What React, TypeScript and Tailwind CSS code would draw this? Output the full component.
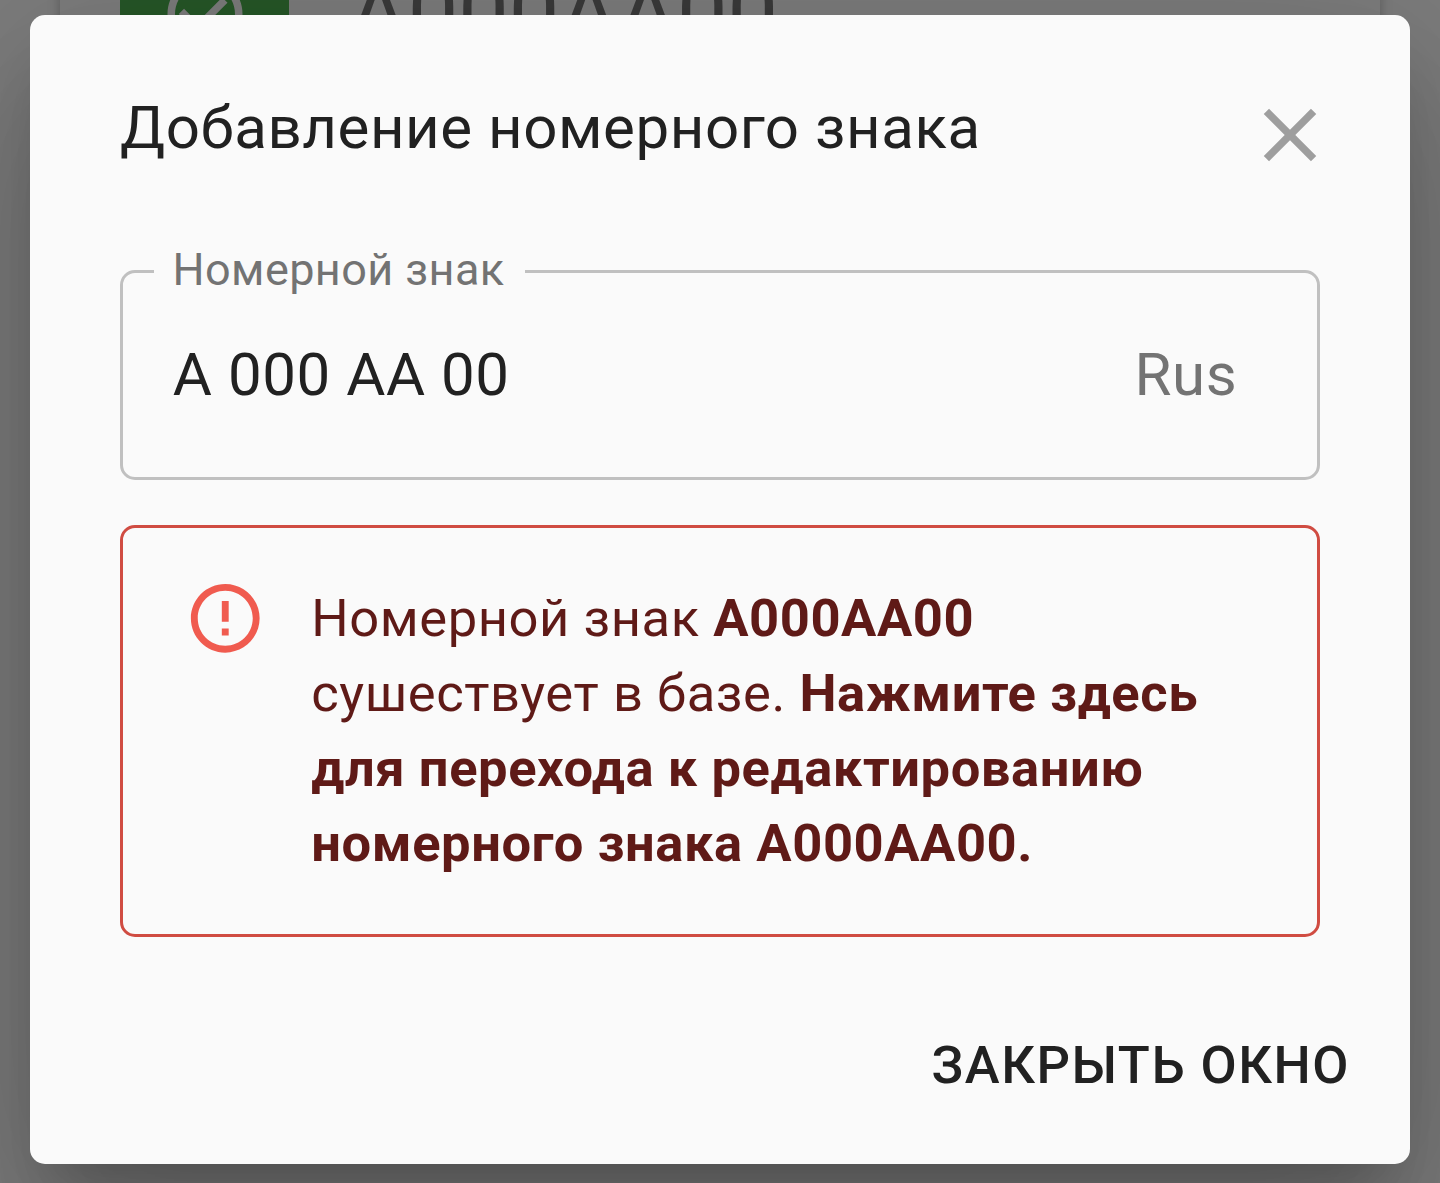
import React from 'react';

const plate = 'A000AA00';

const CheckCircleIcon: React.FC = () => (
  <svg viewBox="0 0 24 24" className="w-[90px] h-[90px] fill-[#fafafa]">
    <path d="M16.59 7.58L10 14.17l-3.59-3.58L5 12l5 5 8-8zM12 2C6.48 2 2 6.48 2 12s4.48 10 10 10 10-4.48 10-10S17.52 2 12 2zm0 18c-4.42 0-8-3.58-8-8s3.58-8 8-8 8 3.58 8 8-3.58 8-8 8z" />
  </svg>
);

const CloseIcon: React.FC = () => (
  <svg viewBox="0 0 24 24" className="w-[90px] h-[90px] fill-[#9e9e9e]">
    <path d="M19 6.41L17.59 5 12 10.59 6.41 5 5 6.41 10.59 12 5 17.59 6.41 19 12 13.41 17.59 19 19 17.59 13.41 12z" />
  </svg>
);

const ErrorIcon: React.FC = () => (
  <svg viewBox="0 0 24 24" className="w-[82.5px] h-[82.5px] fill-[#f05b4f]">
    <path d="M11 15h2v2h-2zm0-8h2v6h-2zm.99-5C6.47 2 2 6.48 2 12s4.47 10 9.99 10C17.52 22 22 17.52 22 12S17.52 2 11.99 2zM12 20c-4.42 0-8-3.58-8-8s3.58-8 8-8 8 3.58 8 8-3.58 8-8 8z" />
  </svg>
);

// List row that stays visible behind the dialog
const PlateCard: React.FC = () => (
  <div className="mx-[60px] -mt-[71px] h-[170px] pl-[60px] flex items-center bg-[#fafafa] shadow-[0_4px_11px_rgba(0,0,0,0.25)]">
    <div className="w-[169px] h-[170px] flex items-center justify-center bg-[#4caf50]">
      <CheckCircleIcon />
    </div>
    <span className="ml-[60px] text-[90px] leading-[120px] text-[#757575]">{plate}</span>
  </div>
);

const App: React.FC = () => {
  return (
    <div className="relative h-[1183px] overflow-hidden bg-[#fafafa] font-['Roboto',sans-serif] text-[#212121]">
      <PlateCard />

      <div className="absolute inset-0 bg-black/50 px-[30px] pt-[15px]">
        <div className="h-[1149px] rounded-[15px] bg-[#fafafa] flex flex-col shadow-[0_41px_56px_-26px_rgba(0,0,0,0.2),0_90px_142px_11px_rgba(0,0,0,0.14),0_34px_172px_30px_rgba(0,0,0,0.12)]">
          {/* Header */}
          <div className="flex justify-between pl-[90px] pr-[75px] pt-[68px]">
            <h2 className="text-[60px] leading-[90px] tracking-[0.5625px]">Добавление номерного знака</h2>
            <button className="mt-[7px] w-[90px] h-[90px]">
              <CloseIcon />
            </button>
          </div>

          {/* Plate number field */}
          <fieldset className="mx-[90px] mt-[67px] h-[233px] rounded-[15px] border-[3px] border-[#c0c0c0] px-[31px]">
            <legend className="h-[48px] pl-[18.5px] pr-[20.5px] text-[45px] leading-[46px] tracking-[0.42px] text-[#737373]">
              Номерной знак
            </legend>
            <div className="mt-[42px] pl-[18.75px] pr-[18.75px] flex justify-between text-[60px] leading-[76px] tracking-[0.5625px]">
              <span>A 000 AA 00</span>
              <span className="mr-[30px] text-[#737373]">Rus</span>
            </div>
          </fieldset>

          {/* Error message */}
          <div className="mx-[90px] mt-[45px] h-[412px] rounded-[15px] border-[3px] border-[#d04c42] pl-[60.75px] pt-[49px] flex">
            <div className="shrink-0">
              <ErrorIcon />
            </div>
            <p className="ml-[45px] mt-[4px] text-[52.5px] leading-[75px] tracking-[0.5625px] text-[#5f1a17]">
              Номерной знак <b>{plate}</b>
              <br />
              сушествует в базе. <b>Нажмите здесь</b>
              <br />
              <b>для перехода к редактированию</b>
              <br />
              <b>номерного знака {plate}.</b>
            </p>
          </div>

          {/* Actions */}
          <div className="mt-[82px] pr-[60px] flex justify-end">
            <button className="text-[52.5px] leading-[92px] font-medium uppercase tracking-[1.5px]">
              Закрыть окно
            </button>
          </div>
        </div>
      </div>
    </div>
  );
};

export default App;
